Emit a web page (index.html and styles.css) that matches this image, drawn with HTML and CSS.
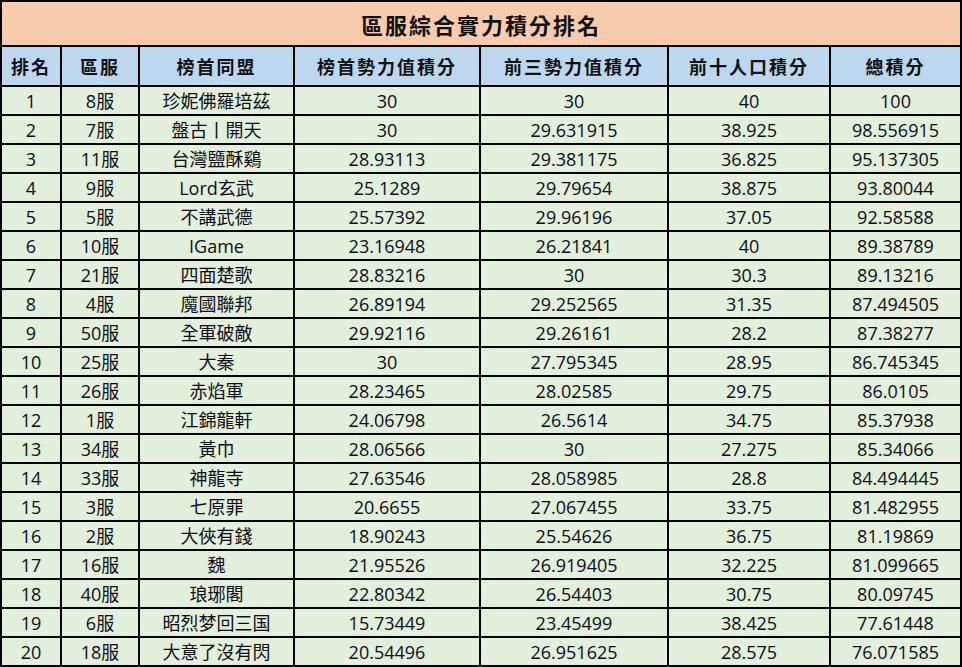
FILE: index.html
```html
<!DOCTYPE html>
<html lang="zh-Hant">
<head>
<meta charset="utf-8">
<title>區服綜合實力積分排名</title>
<link rel="stylesheet" href="styles.css">
</head>
<body>
<div class="sheet">
  <div class="cell title">區服綜合實力積分排名</div>
  <div class="cell head">排名</div><div class="cell head">區服</div><div class="cell head">榜首同盟</div><div class="cell head">榜首勢力值積分</div><div class="cell head">前三勢力值積分</div><div class="cell head">前十人口積分</div><div class="cell head">總積分</div>
  <div class="cell">1</div><div class="cell">8服</div><div class="cell">珍妮佛羅培茲</div><div class="cell">30</div><div class="cell">30</div><div class="cell">40</div><div class="cell">100</div>
  <div class="cell">2</div><div class="cell">7服</div><div class="cell">盤古丨開天</div><div class="cell">30</div><div class="cell">29.631915</div><div class="cell">38.925</div><div class="cell">98.556915</div>
  <div class="cell">3</div><div class="cell">11服</div><div class="cell">台灣鹽酥鷄</div><div class="cell">28.93113</div><div class="cell">29.381175</div><div class="cell">36.825</div><div class="cell">95.137305</div>
  <div class="cell">4</div><div class="cell">9服</div><div class="cell">Lord玄武</div><div class="cell">25.1289</div><div class="cell">29.79654</div><div class="cell">38.875</div><div class="cell">93.80044</div>
  <div class="cell">5</div><div class="cell">5服</div><div class="cell">不講武德</div><div class="cell">25.57392</div><div class="cell">29.96196</div><div class="cell">37.05</div><div class="cell">92.58588</div>
  <div class="cell">6</div><div class="cell">10服</div><div class="cell">IGame</div><div class="cell">23.16948</div><div class="cell">26.21841</div><div class="cell">40</div><div class="cell">89.38789</div>
  <div class="cell">7</div><div class="cell">21服</div><div class="cell">四面楚歌</div><div class="cell">28.83216</div><div class="cell">30</div><div class="cell">30.3</div><div class="cell">89.13216</div>
  <div class="cell">8</div><div class="cell">4服</div><div class="cell">魔國聯邦</div><div class="cell">26.89194</div><div class="cell">29.252565</div><div class="cell">31.35</div><div class="cell">87.494505</div>
  <div class="cell">9</div><div class="cell">50服</div><div class="cell">全軍破敵</div><div class="cell">29.92116</div><div class="cell">29.26161</div><div class="cell">28.2</div><div class="cell">87.38277</div>
  <div class="cell">10</div><div class="cell">25服</div><div class="cell">大秦</div><div class="cell">30</div><div class="cell">27.795345</div><div class="cell">28.95</div><div class="cell">86.745345</div>
  <div class="cell">11</div><div class="cell">26服</div><div class="cell">赤焰軍</div><div class="cell">28.23465</div><div class="cell">28.02585</div><div class="cell">29.75</div><div class="cell">86.0105</div>
  <div class="cell">12</div><div class="cell">1服</div><div class="cell">江錦龍軒</div><div class="cell">24.06798</div><div class="cell">26.5614</div><div class="cell">34.75</div><div class="cell">85.37938</div>
  <div class="cell">13</div><div class="cell">34服</div><div class="cell">黃巾</div><div class="cell">28.06566</div><div class="cell">30</div><div class="cell">27.275</div><div class="cell">85.34066</div>
  <div class="cell">14</div><div class="cell">33服</div><div class="cell">神龍寺</div><div class="cell">27.63546</div><div class="cell">28.058985</div><div class="cell">28.8</div><div class="cell">84.494445</div>
  <div class="cell">15</div><div class="cell">3服</div><div class="cell">七原罪</div><div class="cell">20.6655</div><div class="cell">27.067455</div><div class="cell">33.75</div><div class="cell">81.482955</div>
  <div class="cell">16</div><div class="cell">2服</div><div class="cell">大俠有錢</div><div class="cell">18.90243</div><div class="cell">25.54626</div><div class="cell">36.75</div><div class="cell">81.19869</div>
  <div class="cell">17</div><div class="cell">16服</div><div class="cell">魏</div><div class="cell">21.95526</div><div class="cell">26.919405</div><div class="cell">32.225</div><div class="cell">81.099665</div>
  <div class="cell">18</div><div class="cell">40服</div><div class="cell">琅琊閣</div><div class="cell">22.80342</div><div class="cell">26.54403</div><div class="cell">30.75</div><div class="cell">80.09745</div>
  <div class="cell">19</div><div class="cell">6服</div><div class="cell">昭烈梦回三国</div><div class="cell">15.73449</div><div class="cell">23.45499</div><div class="cell">38.425</div><div class="cell">77.61448</div>
  <div class="cell">20</div><div class="cell">18服</div><div class="cell">大意了沒有閃</div><div class="cell">20.54496</div><div class="cell">26.951625</div><div class="cell">28.575</div><div class="cell">76.071585</div>
</div>
</body>
</html>
```
FILE: styles.css
```css
html, body {
  margin: 0;
  padding: 0;
  background: #ffffff;
}

.sheet {
  width: 962px;
  height: 667px;
  box-sizing: border-box;
  display: grid;
  grid-template-columns: 58px 76px 153px 184px 186px 160px 129px;
  grid-template-rows: 43px 38px repeat(20, 27px);
  gap: 2px;
  padding: 2px;
  background: #000000;
  font-family: "Open Sans", "Noto Sans CJK TC", sans-serif;
  font-size: 18px;
  color: #0d0d1a;
}

.cell {
  background: #e2efda;
  display: flex;
  align-items: center;
  justify-content: center;
  white-space: nowrap;
  line-height: 1;
}

.title {
  grid-column: 1 / -1;
  background: #f8cbad;
  font-family: "Noto Sans CJK TC", sans-serif;
  font-weight: 700;
  font-size: 22px;
  letter-spacing: 2px;
  color: #111111;
}

.head {
  background: #bdd7ee;
  font-family: "Noto Sans CJK TC", sans-serif;
  font-weight: 700;
  font-size: 18px;
  letter-spacing: 2px;
  color: #111111;
}
```
